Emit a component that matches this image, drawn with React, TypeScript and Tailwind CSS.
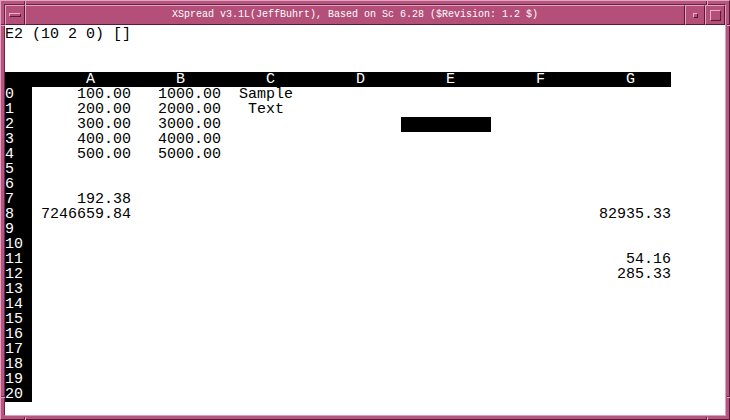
import React from "react";

type Cell = { t: string; a?: "r" | "c" };

const data: Record<number, (Cell | null)[]> = {
  0: [{ t: "100.00", a: "r" }, { t: "1000.00", a: "r" }, { t: "Sample", a: "c" }],
  1: [{ t: "200.00", a: "r" }, { t: "2000.00", a: "r" }, { t: "Text", a: "c" }],
  2: [{ t: "300.00", a: "r" }, { t: "3000.00", a: "r" }],
  3: [{ t: "400.00", a: "r" }, { t: "4000.00", a: "r" }],
  4: [{ t: "500.00", a: "r" }, { t: "5000.00", a: "r" }],
  7: [{ t: "192.38", a: "r" }],
  8: [{ t: "7246659.84", a: "r" }, null, null, null, null, null, { t: "82935.33", a: "r" }],
  11: [null, null, null, null, null, null, { t: "54.16", a: "r" }],
  12: [null, null, null, null, null, null, { t: "285.33", a: "r" }],
};

const cols = ["A", "B", "C", "D", "E", "F", "G"];

const bevel = "border border-t-[#e6a4c0] border-l-[#e6a4c0] border-r-[#5a1a36] border-b-[#5a1a36]";
const bevelSmall = "border border-t-[#eab0c8] border-l-[#eab0c8] border-r-[#5a1a36] border-b-[#5a1a36]";

function CornerNotches() {
  const dark = "#6a2444";
  const light = "#e6a4c0";
  return (
    <svg className="absolute inset-0 pointer-events-none" width="730" height="420" viewBox="0 0 730 420">
      {/* top */}
      <rect x="23" y="0" width="1" height="4" fill={dark} />
      <rect x="24" y="0" width="1" height="4" fill={light} />
      <rect x="705" y="0" width="1" height="4" fill={dark} />
      <rect x="706" y="0" width="1" height="4" fill={light} />
      {/* bottom */}
      <rect x="23" y="416" width="1" height="4" fill={dark} />
      <rect x="24" y="416" width="1" height="4" fill={light} />
      <rect x="705" y="416" width="1" height="4" fill={dark} />
      <rect x="706" y="416" width="1" height="4" fill={light} />
      {/* left */}
      <rect x="0" y="23" width="4" height="1" fill={dark} />
      <rect x="0" y="24" width="4" height="1" fill={light} />
      <rect x="0" y="395" width="4" height="1" fill={dark} />
      <rect x="0" y="396" width="4" height="1" fill={light} />
      {/* right */}
      <rect x="726" y="23" width="4" height="1" fill={dark} />
      <rect x="726" y="24" width="4" height="1" fill={light} />
      <rect x="726" y="395" width="4" height="1" fill={dark} />
      <rect x="726" y="396" width="4" height="1" fill={light} />
    </svg>
  );
}

export default function App() {
  return (
    <div className="w-[730px] h-[420px] relative bg-[#b55680] border border-t-[#e6a4c0] border-l-[#e6a4c0] border-r-[#581632] border-b-[#581632] p-[3px]">
      <CornerNotches />

      <div className="h-full border border-t-[#6a2444] border-l-[#6a2444] border-r-[#e0a0bc] border-b-[#e0a0bc] flex flex-col">
        {/* title bar */}
        <div className="h-[20px] flex bg-[#b34f78]">
          <div className={"w-[20px] h-full flex items-center justify-center " + bevel}>
            <div className={"w-[12px] h-[4px] " + bevelSmall} />
          </div>
          <div
            className={"flex-1 h-full flex items-center justify-center text-white text-[10px] leading-[12px] whitespace-pre " + bevel}
            style={{ fontFamily: '"Liberation Mono", monospace' }}
          >
            XSpread v3.1L(JeffBuhrt), Based on Sc 6.28 ($Revision: 1.2 $)
          </div>
          <div className={"w-[20px] h-full flex items-center justify-center " + bevel}>
            <div className={"w-[5px] h-[5px] " + bevelSmall} />
          </div>
          <div className={"w-[20px] h-full flex items-center justify-center " + bevel}>
            <div className={"w-[11px] h-[11px] " + bevelSmall} />
          </div>
        </div>

        {/* content */}
        <div
          className="flex-1 flex flex-col bg-white text-black text-[15px] leading-[15px] pt-[2px] whitespace-pre"
          style={{ fontFamily: '"Liberation Mono", monospace' }}
        >
          <div className="h-[15px]">E2 (10 2 0) []</div>
          <div className="h-[30px]" />
          <div className="h-[15px] w-[666px] bg-black text-white flex">
            <div className="w-[36px]" />
            {cols.map((c) => (
              <div key={c} className="w-[90px] pl-[45px]">
                {c}
              </div>
            ))}
          </div>
          {Array.from({ length: 21 }, (_, r) => (
            <div key={r} className="h-[15px] flex">
              <div className="w-[27px] bg-black text-white">{String(r)}</div>
              <div className="w-[9px]" />
              {cols.map((c, ci) => {
                const cell = data[r]?.[ci];
                const cursor = r === 2 && c === "E";
                return (
                  <div
                    key={c}
                    className={
                      "w-[90px] " +
                      (cursor ? "bg-black " : "") +
                      (cell?.a === "c" ? "text-center" : "text-right")
                    }
                  >
                    {cell ? cell.t : ""}
                  </div>
                );
              })}
            </div>
          ))}
        </div>
      </div>
    </div>
  );
}
